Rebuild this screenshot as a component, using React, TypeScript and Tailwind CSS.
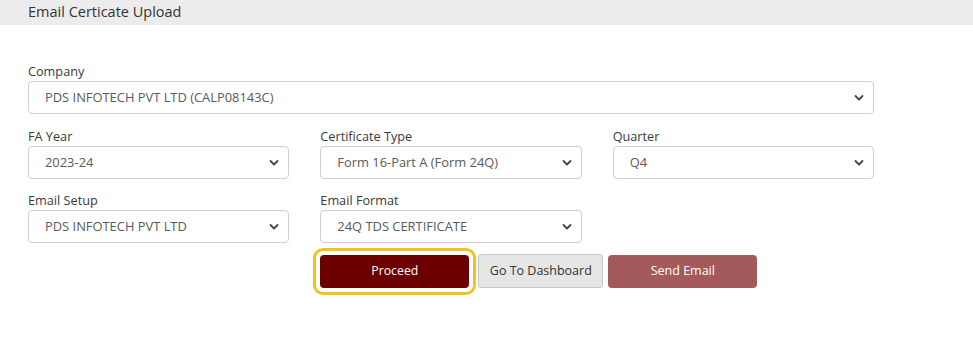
import React from 'react';

const font = { fontFamily: '"Open Sans", "Noto Sans", sans-serif' };

interface FieldProps {
  label: string;
  value: string;
  className?: string;
}

const Chevron = () => (
  <svg className="pointer-events-none absolute right-[10px] top-1/2 -translate-y-1/2" width="10" height="7" viewBox="0 0 10 7">
    <path d="M1.5 1.5 L5 5 L8.5 1.5" fill="none" stroke="#444" strokeWidth="1.8" strokeLinecap="round" strokeLinejoin="round" />
  </svg>
);

const SelectField: React.FC<FieldProps> = ({ label, value, className }) => (
  <div className={className}>
    <label className="block text-[12.7px] leading-[20px] text-[#3a3a3a]">{label}</label>
    <div className="relative">
      <select
        defaultValue={value}
        className="block h-[33px] w-full appearance-none rounded-[4px] border border-[#cfcfcf] bg-white pl-[16px] pr-8 text-[12.9px] text-[#5a5a5a] outline-none"
        style={font}
      >
        <option>{value}</option>
      </select>
      <Chevron />
    </div>
  </div>
);

export default function App() {
  return (
    <div className="min-h-[342px] w-[973px] bg-white" style={font}>
      <div className="h-[25px] bg-[#ececec] pl-[28px] text-[14.5px] leading-[24px] text-[#333]">
        Email Certicate Upload
      </div>

      <div className="w-[874px] pl-[28px] pt-[36px]">
        <SelectField label="Company" value="PDS INFOTECH PVT LTD (CALP08143C)" />

        <div className="mt-[12px] grid grid-cols-3 gap-x-[31px] gap-y-[11px]">
          <SelectField label="FA Year" value="2023-24" />
          <SelectField label="Certificate Type" value="Form 16-Part A (Form 24Q)" />
          <SelectField label="Quarter" value="Q4" />
          <SelectField label="Email Setup" value="PDS INFOTECH PVT LTD" />
          <SelectField label="Email Format" value="24Q TDS CERTIFICATE" />
          <div />

          <div className="col-span-2 col-start-2 flex items-center">
            <div className="relative">
              <span className="pointer-events-none absolute -inset-[7px] rounded-[10px] border-[3px] border-[#f5c21b]" />
              <button className="block h-[33px] w-[149px] rounded-[4px] bg-[#6c0000] text-[12.3px] text-white">
                Proceed
              </button>
            </div>
            <button className="ml-[9px] h-[34px] w-[125px] rounded-[3px] border border-[#c8c8c8] bg-[#e6e6e6] text-[12.5px] text-[#333]">
              Go To Dashboard
            </button>
            <button className="ml-[5px] h-[33px] w-[149px] rounded-[4px] bg-[#a45a5a] text-[12.5px] text-white">
              Send Email
            </button>
          </div>
        </div>
      </div>
    </div>
  );
}
